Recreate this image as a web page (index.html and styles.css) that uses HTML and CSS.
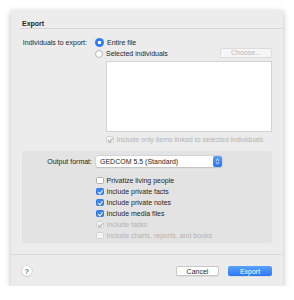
FILE: index.html
```html
<!DOCTYPE html>
<html lang="en">
<head>
    <meta charset="UTF-8">
    <meta name="viewport" content="width=device-width, initial-scale=1.0">
    <title>Export</title>
    <link rel="stylesheet" href="styles.css">
</head>
<body>
    <div class="sheet">
        <div class="title">Export</div>

        <div class="pick">
            <div class="label">Individuals to export:</div>
            <div class="controls">
                <div class="row">
                    <span class="radio on"></span>
                    <span>Entire file</span>
                </div>
                <div class="row">
                    <span class="radio"></span>
                    <span>Selected individuals</span>
                    <span class="btn choose">Choose...</span>
                </div>
                <div class="list"></div>
                <div class="row indent disabled">
                    <span class="check on off"></span>
                    <span>Include only items linked to selected individuals</span>
                </div>
            </div>
        </div>

        <div class="group">
            <div class="format">
                <div class="label">Output format:</div>
                <div class="popup">
                    <span>GEDCOM 5.5 (Standard)</span>
                    <span class="stepper">
                        <svg width="5" height="7" viewBox="0 0 5 7">
                            <path d="M1 2.6 L2.5 1.2 L4 2.6 M1 4.4 L2.5 5.8 L4 4.4" fill="none" stroke="#fff" stroke-width="0.9"/>
                        </svg>
                    </span>
                </div>
            </div>
            <div class="options">
                <div class="row"><span class="check"></span><span>Privatize living people</span></div>
                <div class="row"><span class="check on"></span><span>Include private facts</span></div>
                <div class="row"><span class="check on"></span><span>Include private notes</span></div>
                <div class="row"><span class="check on"></span><span>Include media files</span></div>
                <div class="row disabled"><span class="check on off"></span><span>Include tasks</span></div>
                <div class="row disabled"><span class="check off"></span><span>Include charts, reports, and books</span></div>
            </div>
        </div>

        <div class="separator"></div>

        <div class="footer">
            <span class="help">?</span>
            <span class="btn cancel">Cancel</span>
            <span class="btn primary">Export</span>
        </div>
    </div>
</body>
</html>
```

FILE: styles.css
```css
body {
    margin: 0;
    background: #fff;
    font-family: "Liberation Sans", Arial, sans-serif;
    font-size: 7px;
    color: #262626;
}
.sheet {
    margin: 10px 0 0 11px;
    width: 272px;
    box-sizing: border-box;
    padding: 10px 11px 10px;
    background: #ececec;
    box-shadow: 0 2px 6px rgba(0, 0, 0, 0.28);
}
.title {
    height: 8px;
    line-height: 8px;
    font-weight: bold;
    border-bottom: 1px solid #d6d6d6;
    margin: 0 -11px 0 -2px;
    padding-left: 2px;
}
.pick {
    display: grid;
    grid-template-columns: 65px 1fr;
    column-gap: 8px;
    margin-top: 8px;
}
.label {
    text-align: right;
    line-height: 11px;
    white-space: nowrap;
}
.row {
    display: flex;
    align-items: center;
    gap: 2px;
    height: 11px;
    white-space: nowrap;
}
.indent {
    padding-left: 11px;
}
.disabled {
    color: #b3b3b3;
}
.radio {
    width: 8px;
    height: 8px;
    border-radius: 50%;
    background: #fff;
    border: 0.5px solid #b5b5b5;
    box-sizing: border-box;
    margin-right: 1px;
}
.radio.on {
    width: 9px;
    height: 9px;
    border: none;
    background: radial-gradient(circle, #fff 0 1.6px, #2f7df6 2px);
}
.list {
    margin: 2px 0 0 11px;
    height: 71px;
    background: #fff;
    border: 1px solid #d3d3d3;
    box-sizing: border-box;
}
.pick .row.indent {
    margin-top: 2px;
}
.check {
    width: 7.5px;
    height: 7.5px;
    box-sizing: border-box;
    border: 0.5px solid #b0b0b0;
    border-radius: 1.5px;
    background: #fff;
    margin-right: 1px;
    position: relative;
}
.check.on {
    background: #3a86f7;
    border-color: #2f78e8;
}
.check.on::after {
    content: "";
    position: absolute;
    left: 2.2px;
    top: 0.6px;
    width: 1.8px;
    height: 3.8px;
    border: solid #fff;
    border-width: 0 1px 1px 0;
    transform: rotate(40deg);
}
.check.off {
    background: #f4f4f4;
    border-color: #d2d2d2;
}
.check.on.off::after {
    border-color: #a8a8a8;
}
.btn {
    display: inline-flex;
    align-items: center;
    justify-content: center;
    height: 10px;
    box-sizing: border-box;
    border-radius: 2px;
    background: #fff;
    border: 0.5px solid #c8c8c8;
    box-shadow: 0 0.5px 0.5px rgba(0, 0, 0, 0.12);
}
.choose {
    margin-left: auto;
    width: 52px;
    color: #b8b8b8;
    background: #f6f6f6;
    border-color: #dcdcdc;
    box-shadow: none;
    position: relative;
    top: -1px;
}
.group {
    margin-top: 6px;
    height: 92px;
    box-sizing: border-box;
    padding-top: 5px;
    background: #e3e3e3;
    border-radius: 3px;
}
.format {
    display: grid;
    grid-template-columns: 70px 126px;
    column-gap: 4px;
    align-items: center;
}
.popup {
    display: flex;
    align-items: center;
    height: 11px;
    padding-left: 4px;
    background: #fff;
    border-radius: 2px;
    box-shadow: 0 0 0 0.5px #c6c6c6, 0 0.5px 1px rgba(0, 0, 0, 0.15);
}
.stepper {
    margin-left: auto;
    width: 9px;
    height: 11px;
    border-radius: 2px;
    background: linear-gradient(#5a9ff8, #2a74f0);
    display: flex;
    align-items: center;
    justify-content: center;
}
.options {
    margin: 8px 0 0 74px;
}
.separator {
    margin: 11px -11px 0;
    border-top: 1px solid #d9d9d9;
}
.footer {
    display: flex;
    align-items: center;
    margin-top: 11px;
    height: 10px;
}
.help {
    width: 9.5px;
    height: 9.5px;
    border-radius: 50%;
    background: #fff;
    box-shadow: 0 0 0 0.5px #c6c6c6, 0 0.5px 1px rgba(0, 0, 0, 0.2);
    display: flex;
    align-items: center;
    justify-content: center;
}
.cancel {
    margin-left: auto;
    width: 43px;
}
.primary {
    margin-left: 9px;
    width: 44px;
    color: #fff;
    border: none;
    background: linear-gradient(#5aa2f9, #2b78f4);
}
```
